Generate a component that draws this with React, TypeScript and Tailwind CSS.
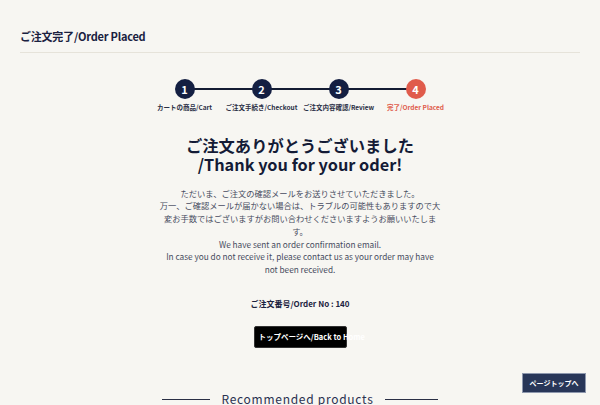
const STEPS = [
    { no: 1, label: "カートの商品/Cart" },
    { no: 2, label: "ご注文手続き/Checkout" },
    { no: 3, label: "ご注文内容確認/Review" },
    { no: 4, label: "完了/Order Placed" },
];

const FONT = "font-['Noto_Sans_CJK_JP','Noto_Sans',sans-serif]";

// ─── Step indicator ───────────────────────────────────────────────────────────

const Steps = () => (
    <div className="flex justify-center mt-[26px]">
        {STEPS.map((s, i) => {
            const done = s.no === 4;
            return (
                <div key={s.no} className="relative flex flex-col items-center w-[77px]">
                    {i > 0 && <span className="absolute top-[9px] right-1/2 w-[77px] h-[2px] bg-[#141c33]" />}
                    <span
                        className={`relative z-10 flex items-center justify-center w-[20px] h-[20px] rounded-full text-white text-[11px] font-bold leading-none ${
                            done ? "bg-[#e05b4b]" : "bg-[#141f42]"
                        }`}
                    >
                        {s.no}
                    </span>
                    <span
                        className={`mt-[5px] text-[6.5px] font-bold whitespace-nowrap leading-none ${
                            done ? "text-[#e05b4b]" : "text-[#2a2f45]"
                        }`}
                    >
                        {s.label}
                    </span>
                </div>
            );
        })}
    </div>
);

// ─── Page ─────────────────────────────────────────────────────────────────────

export default function App() {
    return (
        <div className={`min-h-screen bg-[#f7f6f2] text-[#1c2340] ${FONT}`}>
            <div className="px-5 pt-[28px]">
                <h1 className="text-[11px] font-bold leading-[16px] tracking-[-0.02em] text-[#1a2140]">ご注文完了/Order Placed</h1>
                <div className="mt-[8px] h-px bg-[#e6e3da]" />
            </div>

            <Steps />

            <div className="flex flex-col items-center text-center">
                <h2 className="mt-[25px] text-[16.3px] font-bold leading-[19px] text-[#141b36]">
                    ご注文ありがとうございました
                    <br />
                    /Thank you for your oder!
                </h2>

                <p className="mt-[13px] text-[8.25px] leading-[12.8px] text-[#474c60] whitespace-nowrap">
                    ただいま、ご注文の確認メールをお送りさせていただきました。
                    <br />
                    万一、ご確認メールが届かない場合は、トラブルの可能性もありますので大
                    <br />
                    変お手数ではございますがお問い合わせくださいますようお願いいたしま
                    <br />
                    す。
                    <br />
                    We have sent an order confirmation email.
                    <br />
                    In case you do not receive it, please contact us as your order may have
                    <br />
                    not been received.
                </p>

                <p className="mt-[22px] text-[8px] font-bold leading-[12px] text-[#1c2340]">ご注文番号/Order No : 140</p>

                <button className="mt-[16px] w-[93px] h-[22px] bg-black border border-[#333] rounded-[2px] flex items-center pl-[4px] text-white text-[7.5px] font-bold whitespace-nowrap overflow-visible">
                    トップページへ/Back to Home
                </button>

                <div className="mt-[43px] flex items-center gap-[11px]">
                    <span className="w-[48px] h-px bg-[#2a2f45]" />
                    <span className="text-[12px] leading-[16px] tracking-[0.06em] text-[#2a3150]">Recommended products</span>
                    <span className="w-[53px] h-px bg-[#2a2f45]" />
                </div>
                <div className="h-[200px]" />
            </div>

            <button className="fixed right-[14px] bottom-[12px] w-[64px] h-[20px] bg-[#283658] border border-[#8d97ad] text-white text-[7px] font-bold">
                ページトップへ
            </button>
        </div>
    );
}
